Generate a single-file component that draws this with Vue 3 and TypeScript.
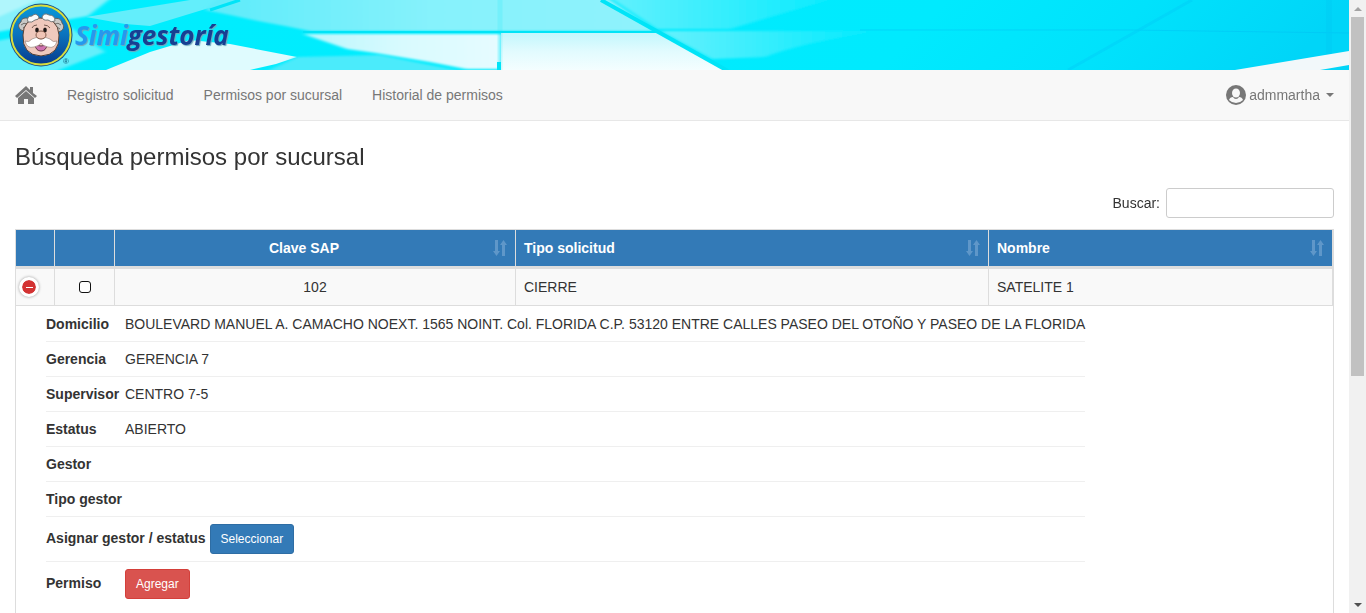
<script setup lang="ts">
import { ref } from 'vue'

interface Detail { label: string; value?: string; action?: string; tone?: string }

const links = ['Registro solicitud', 'Permisos por sucursal', 'Historial de permisos']
const headers = ['Clave SAP', 'Tipo solicitud', 'Nombre']
const cells = ['102', 'CIERRE', 'SATELITE 1']
const details: Detail[] = [
  { label: 'Domicilio', value: 'BOULEVARD MANUEL A. CAMACHO NOEXT. 1565 NOINT. Col. FLORIDA C.P. 53120 ENTRE CALLES PASEO DEL OTOÑO Y PASEO DE LA FLORIDA' },
  { label: 'Gerencia', value: 'GERENCIA 7' },
  { label: 'Supervisor', value: 'CENTRO 7-5' },
  { label: 'Estatus', value: 'ABIERTO' },
  { label: 'Gestor' },
  { label: 'Tipo gestor' },
  { label: 'Asignar gestor / estatus', action: 'Seleccionar', tone: 'primary' },
  { label: 'Permiso', action: 'Agregar', tone: 'danger' },
]
const search = ref('')
const selected = ref(false)
const open = ref(true)
</script>

<template>
  <div class="shell">
    <div class="page">
      <header class="banner">
        <svg class="art" viewBox="0 0 1349 70" preserveAspectRatio="none" aria-hidden="true">
          <defs>
            <linearGradient id="base" x1="0" x2="1" y1="0" y2="0.05">
              <stop offset="0" stop-color="#00eefe" />
              <stop offset="0.7" stop-color="#00eafe" />
              <stop offset="0.85" stop-color="#00e2fc" />
              <stop offset="1" stop-color="#00d5f8" />
            </linearGradient>
            <linearGradient id="upper" x1="0" x2="1" y1="0" y2="0">
              <stop offset="0" stop-color="#5cebfa" />
              <stop offset="0.5" stop-color="#86f2fc" />
              <stop offset="1" stop-color="#8ff3fc" />
            </linearGradient>
            <linearGradient id="haze" x1="0" x2="1" y1="0" y2="0">
              <stop offset="0" stop-color="#66f1fd" />
              <stop offset="1" stop-color="#00eafe" />
            </linearGradient>
            <linearGradient id="pale" x1="0" x2="0" y1="1" y2="0">
              <stop offset="0" stop-color="#f4feff" />
              <stop offset="0.5" stop-color="#e2fbfe" />
              <stop offset="1" stop-color="#c2f7fd" />
            </linearGradient>
            <linearGradient id="streak" x1="0" x2="1" y1="0" y2="0">
              <stop offset="0" stop-color="#b8f7fd" />
              <stop offset="0.5" stop-color="#d8fafe" />
              <stop offset="1" stop-color="#e6fcff" />
            </linearGradient>
            <filter id="soft"><feGaussianBlur stdDeviation="2 1" /></filter>
          </defs>
          <rect width="1349" height="70" fill="url(#base)" />
          <path d="M-9 -9H120L88 16 -9 33Z" fill="#86f1fb" filter="url(#soft)" />
          <path d="M-9 -9H60L-9 20Z" fill="#b0f6fc" filter="url(#soft)" />
          <path d="M86 17 190 0H235L150 26 125 24Z" fill="#63eefb" />
          <path d="M225 -9H598L655 31H310L285 26 258 21 230 15 205 10Z" fill="url(#upper)" filter="url(#soft)" />
          <path d="M-9 42 70 27 105 52 36 79H-9Z" fill="#63effb" filter="url(#soft)" />
          <path d="M106 70 150 52 190 40 230 44 297 57 276 64 250 70Z" fill="#dffbfe" />
          <path d="M250 79 297 57 380 55 500 79Z" fill="#4cebfb" filter="url(#soft)" />
          <path d="M303 34H501V69H466L430 62 376 53 347 49Z" fill="url(#streak)" filter="url(#soft)" />
          <path d="M501 33H658L726 70H501Z" fill="url(#pale)" />
          <path d="M600 -9H860Q760 20 730 29H657Z" fill="url(#haze)" filter="url(#soft)" />
          <path d="M660 31H880Q800 43 765 57L712 59Z" fill="url(#haze)" filter="url(#soft)" />
          <g fill="none" stroke="#00e4f7">
            <path d="M303 32H658" stroke-width="2" />
            <path d="M601 0 728 71" stroke-width="4" />
            <path d="M500 0V70" stroke-width="5" opacity=".15" />
            <path d="M499 62V70" stroke-width="4" />
            <path d="M210 10 240 0" stroke-width="3" />
          </g>
          <g fill="none" stroke="#00bff2" opacity=".45">
            <path d="M860 30H1130L1349 33" />
            <path d="M1068 70 1192 0" stroke-width="3" opacity=".6" />
            <path d="M1329 0V55" stroke-width="6" opacity=".5" />
          </g>
          <path d="M1235 70 1349 51V65L1320 70Z" fill="#f2f8fa" />
        </svg>
        <div class="brand">
          <svg class="face" viewBox="0 0 66 66" role="img" aria-label="Simi">
            <defs>
              <linearGradient id="disc" x1="0" x2="0" y1="0" y2="1">
                <stop offset="0" stop-color="#0b98da" />
                <stop offset="0.5" stop-color="#0a72bd" />
                <stop offset="1" stop-color="#083a8c" />
              </linearGradient>
            </defs>
            <circle cx="32" cy="33" r="31.5" fill="#174d83" />
            <circle cx="32" cy="33" r="29.5" fill="url(#disc)" stroke="#d8dd3d" stroke-width="2" />
            <path d="M15 29C9 28 8 22 12 20 12 16 17 15 20 17L23 24 17 32ZM48 31 42 23 45 17C49 15 53 18 53 21 56 24 55 29 49 30Z" fill="#c9c9c6" stroke="#5f5d5a" />
            <path d="M12 23Q15 20 18 22M14 26Q17 23 20 25M52 23Q49 20 46 22M51 27Q48 24 45 25" fill="none" stroke="#6f6d6a" />
            <path d="M14 33Q14 17 31 16 49 16 50 33 51 53 32 54 13 53 14 33Z" fill="#efc9bd" stroke="#544035" />
            <path d="M19 20Q17 14 23 14 27 10 30 15 30 18 26 18 23 21 19 20ZM33 15Q35 10 40 13 46 13 46 19 42 21 39 18 34 19 33 15Z" fill="#fafafa" stroke="#777" />
            <ellipse cx="28" cy="28" rx="1.800" ry="2.500" fill="#1d1715" />
            <ellipse cx="36" cy="28" rx="1.800" ry="2.500" fill="#1d1715" />
            <path d="M23 26Q24 23 28 23M35 23Q39 23 41 26" fill="none" stroke="#765a4f" />
            <path d="M26 43Q32 45 38 43 37 49 32 49 27 49 26 43Z" fill="#cf72b0" stroke="#643848" />
            <path d="M32 37Q27 34 23 37 20 41 16 39 18 47 25 45 30 44 32 41 34 44 39 45 46 47 48 39 44 41 41 37 37 34 32 37Z" fill="#fff" stroke="#8b7a72" stroke-width=".6" />
            <ellipse cx="32" cy="33" rx="5" ry="4" fill="#f1c5b6" stroke="#845b4a" />
            <text x="54" y="62" class="registered">®</text>
          </svg>
          <span class="wordmark"><span class="simi">Simi</span>gestoría</span>
        </div>
      </header>

      <nav class="navbar">
        <a href="#" class="home" aria-label="Inicio">
          <svg viewBox="0 0 22 18" aria-hidden="true">
            <path d="M0 10 11 0 15 4V1H18V7L22 10 20 12 11 4 2 12Z" />
            <path d="M3 12 11 5 19 12V18H13V13H9V18H3Z" />
          </svg>
        </a>
        <a v-for="link in links" :key="link" href="#" class="link">{{ link }}</a>
        <a href="#" class="user">
          <svg viewBox="0 0 20 20" aria-hidden="true">
            <circle cx="10" cy="10" r="10" />
            <path class="light" d="M3 15Q4 12 7 12 8 14 10 14T13 12Q16 12 17 15 14 18 10 18T3 15Z" />
            <ellipse cx="10" cy="8" rx="4" ry="4.500" class="light" />
          </svg>
          admmartha
          <span class="caret"></span>
        </a>
      </nav>

      <main>
        <h1>Búsqueda permisos por sucursal</h1>
        <div class="filter">
          <label for="buscar">Buscar:</label>
          <input id="buscar" v-model="search" type="search" />
        </div>
        <table class="grid">
          <colgroup><col class="c-toggle" /><col class="c-check" /><col class="c-key" /><col class="c-type" /><col class="c-name" /></colgroup>
          <thead>
            <tr>
              <th></th>
              <th></th>
              <th v-for="(h, i) in headers" :key="h" :class="{ center: i === 0 }">
                <div class="heading">
                  <span>{{ h }}</span>
                  <svg viewBox="0 0 14 16" aria-hidden="true"><path d="M2 0H5V11H7L3.500 16 0 11H2ZM9 16H12V5H14L10.500 0 7 5H9Z" /></svg>
                </div>
              </th>
            </tr>
          </thead>
          <tbody>
            <tr class="row">
              <td class="toggle-cell"><button type="button" class="toggle" aria-label="Detalle" @click="open = !open"></button></td>
              <td class="center"><input v-model="selected" type="checkbox" class="check" aria-label="Seleccionar fila" /></td>
              <td v-for="(c, i) in cells" :key="c" :class="{ center: i === 0 }">{{ c }}</td>
            </tr>
            <tr v-if="open">
              <td colspan="5" class="child">
                <ul>
                  <li v-for="d in details" :key="d.label">
                    <span class="label">{{ d.label }}</span>
                    <button v-if="d.action" type="button" class="btn" :class="d.tone">{{ d.action }}</button>
                    <span v-else>{{ d.value }}</span>
                  </li>
                </ul>
              </td>
            </tr>
          </tbody>
        </table>
      </main>
    </div>
    <div class="scrollbar" aria-hidden="true">
      <span class="arrow up"></span>
      <div class="track"><div class="thumb"></div></div>
      <span class="arrow down"></span>
    </div>
  </div>
</template>

<style>
body { margin: 0; overflow: hidden; }
</style>

<style scoped>
* { box-sizing: border-box; }
.shell {
  display: grid;
  grid-template-columns: minmax(0, 1fr) 17px;
  height: 100vh;
  overflow: hidden;
  color: #333;
  background: #fff;
  font: 14px/20px "Liberation Sans", Arial, sans-serif;
}
.page { overflow: hidden; }
.banner { display: grid; height: 70px; overflow: hidden; }
.banner > * { grid-area: 1 / 1; }
.art { width: 100%; height: 70px; }
.brand { display: flex; align-items: center; z-index: 1; padding-left: 9px; }
.face { width: 66px; height: 66px; flex: none; }
.registered { font: bold 8px "Liberation Sans", Arial, sans-serif; fill: #17718b; }
.wordmark {
  color: #173f92;
  font: italic 700 26px/36px "Open Sans", sans-serif;
  text-shadow: 1px 1px 1px #6fa6bd;
}
.simi { color: #2598ee; }
.navbar {
  display: flex;
  align-items: center;
  height: 51px;
  padding-right: 15px;
  border-bottom: 1px solid #e7e7e7;
  background: #f8f8f8;
}
.navbar a { color: #777; text-decoration: none; }
.navbar svg { fill: currentColor; }
.home { padding: 0 15px; }
.home svg { display: block; width: 22px; height: 18px; }
.link { padding: 15px; }
.user { display: flex; align-items: center; gap: 3px; margin-left: auto; }
.user svg { width: 20px; height: 20px; }
.user .light { fill: #f8f8f8; }
.caret { margin-left: 3px; border: 4px solid transparent; border-top-color: #777; border-bottom: 0; }
main { padding: 20px 15px 0; }
h1 { margin: 0; font-size: 24px; font-weight: 400; line-height: 32px; }
.filter { display: flex; align-items: center; justify-content: flex-end; gap: 6px; margin: 15px 0 11px; }
.filter input { width: 168px; height: 30px; padding: 5px 10px; border: 1px solid #ccc; border-radius: 3px; background: #fff; font: 12px/18px "Liberation Sans", Arial, sans-serif; }
.grid { width: 100%; table-layout: fixed; border: 1px solid #ddd; border-collapse: separate; border-spacing: 0; }
.c-toggle { width: 39px; }
.c-check { width: 60px; }
.c-key { width: 401px; }
.c-type { width: 473px; }
th, td { height: 37px; padding: 8px; border-right: 1px solid #ddd; text-align: left; }
th { height: 39px; border-bottom: 3px solid #ddd; background: #337ab7; color: #fff; }
.row td { border-bottom: 1px solid #ddd; background: #f9f9f9; }
.row .center, th.center { text-align: center; }
.heading { display: flex; align-items: center; gap: 8px; }
.heading span { flex: 1; }
.heading svg { width: 14px; height: 16px; fill: #5f97c9; }
.row .toggle-cell { padding: 0 3px; }
.toggle { display: flex; align-items: center; justify-content: center; width: 20px; height: 20px; padding: 0; border: 3px solid #fff; border-radius: 50%; background: #d33333; background-clip: padding-box; box-shadow: 0 0 3px #999; }
.toggle::before { width: 7px; height: 1px; background: #fff; content: ""; }
.check { display: block; width: 12px; height: 12px; margin: 0 auto; border: 1px solid #111; border-radius: 3px; background: #fff; appearance: none; }
.check:checked { background: #337ab7; }
td.child { padding: 8px 30px; border-right: 0; }
ul { display: inline-block; margin: 0; padding: 0; list-style: none; }
li { padding: 7px 0; border-bottom: 1px solid #efefef; }
li:first-child { padding-top: 0; }
li:last-child { border-bottom: 0; }
.label { display: inline-block; min-width: 75px; margin-right: 4px; font-weight: 700; }
.btn { height: 30px; padding: 5px 10px; border: 1px solid; border-radius: 3px; color: #fff; font: 12px/18px "Liberation Sans", Arial, sans-serif; vertical-align: middle; }
.primary { border-color: #2e6da4; background: #337ab7; }
.danger { border-color: #d43f3a; background: #d9534f; }
.scrollbar { display: flex; flex-direction: column; align-items: center; background: #f1f1f1; }
.arrow { display: flex; align-items: center; justify-content: center; width: 17px; height: 17px; }
.arrow::before { border: 4px solid transparent; content: ""; }
.up::before { border-top: 0; border-bottom-color: #a3a3a3; }
.down::before { border-bottom: 0; border-top-color: #505050; }
.track { flex: 1; width: 13px; }
.thumb { height: 62%; background: #c1c1c1; }
</style>
